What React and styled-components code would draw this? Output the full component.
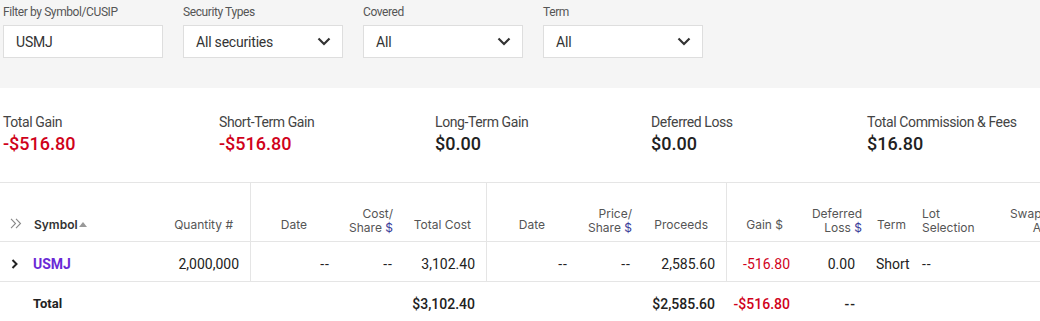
import React from 'react';
import styled, { createGlobalStyle } from 'styled-components';

const Global = createGlobalStyle`
  html, body { margin: 0; padding: 0; background: #fff; overflow: hidden; }
  body { font-family: Roboto, "Noto Sans", sans-serif; color: #222; }
  * { box-sizing: border-box; }
`;

const Page = styled.div`
  width: 1040px;
  overflow: hidden;
`;

const FilterBar = styled.div`
  display: flex;
  gap: 20px;
  height: 88px;
  padding: 5px 3px 0;
  background: #f5f5f5;
`;

const Field = styled.div`
  display: flex;
  flex-direction: column;
  width: 160px;
`;

const FieldLabel = styled.label`
  font-size: 12px;
  line-height: 14px;
  letter-spacing: -0.4px;
  color: #555;
  margin-bottom: 6px;
`;

const Box = styled.div`
  height: 33px;
  display: flex;
  align-items: center;
  justify-content: space-between;
  padding: 0 11px 0 12px;
  background: #fff;
  border: 1px solid #dedede;
  font-size: 14px;
  letter-spacing: -0.2px;
  color: #333;
`;

const Chevron = () => (
  <svg width="14" height="9" viewBox="0 0 14 9">
    <path d="M1.5 1.5 L7 7 L12.5 1.5" fill="none" stroke="#333" strokeWidth="2.2" />
  </svg>
);

const Summary = styled.div`
  display: grid;
  grid-template-columns: repeat(5, 216px);
  padding: 25px 3px 26px;
`;

const Stat = styled.div`
  display: flex;
  flex-direction: column;
`;

const StatLabel = styled.div`
  font-size: 14px;
  line-height: 18px;
  letter-spacing: -0.4px;
  color: #444;
`;

const StatValue = styled.div`
  font-size: 18px;
  line-height: 24px;
  font-weight: 500;
  margin-top: 1px;
  color: ${p => (p.$neg ? '#d0021b' : '#222')};
`;

const Table = styled.table`
  table-layout: fixed;
  width: 1080px;
  border-collapse: separate;
  border-spacing: 0;
  border-top: 1px solid #e5e5e5;
`;

const Th = styled.th`
  height: 59px;
  padding: 0 ${p => p.$pr || 0}px ${p => (p.$two ? 6 : 9)}px ${p => p.$pl || 0}px;
  vertical-align: bottom;
  text-align: ${p => p.$align || 'right'};
  font-family: Inter, Roboto, sans-serif;
  font-size: 12px;
  line-height: 14px;
  font-weight: ${p => (p.$bold ? 600 : 400)};
  color: ${p => (p.$bold ? '#333' : '#555')};
  border-bottom: 1px solid #e5e5e5;
  border-left: ${p => (p.$sep ? '1px solid #e5e5e5' : 'none')};
  white-space: nowrap;
  overflow: hidden;
`;

const Td = styled.td`
  height: 40px;
  padding: 4px ${p => p.$pr || 0}px 0 ${p => p.$pl || 0}px;
  text-align: ${p => p.$align || 'right'};
  font-size: 14px;
  color: ${p => (p.$neg ? '#d0021b' : '#222')};
  border-bottom: 1px solid #e5e5e5;
  border-left: ${p => (p.$sep ? '1px solid #e5e5e5' : 'none')};
  white-space: nowrap;
`;

const FootTd = styled.td`
  height: 40px;
  padding: 3px ${p => p.$pr || 0}px 0 ${p => p.$pl || 0}px;
  text-align: ${p => p.$align || 'right'};
  font-size: ${p => (p.$label ? 13 : 14)}px;
  font-weight: ${p => (p.$label ? 700 : 500)};
  color: ${p => (p.$neg ? '#d0021b' : '#222')};
  white-space: nowrap;
`;

const Dash = styled.span`
  letter-spacing: 1px;
`;

const Dollar = styled.span`
  color: #3a3a9a;
`;

const SymbolLink = styled.a`
  color: #6a2ad6;
  font-weight: 700;
  text-decoration: none;
`;

const SortUp = styled.span`
  display: inline-block;
  width: 0;
  height: 0;
  margin-left: 1px;
  vertical-align: 2px;
  border-left: 4px solid transparent;
  border-right: 4px solid transparent;
  border-bottom: 5px solid #999;
`;

const IconCell = styled.span`
  display: inline-flex;
  padding-left: 10px;
`;

const DoubleChevron = () => (
  <svg width="12" height="11" viewBox="0 0 12 11">
    <path d="M1 0.8 L5.5 5.5 L1 10.2 M6 0.8 L10.5 5.5 L6 10.2" fill="none" stroke="#888" strokeWidth="1.1" />
  </svg>
);

const RowChevron = () => (
  <svg width="8" height="10" viewBox="0 0 8 10">
    <path d="M1.5 1 L5.5 5 L1.5 9" fill="none" stroke="#222" strokeWidth="2" />
  </svg>
);

const cols = [28, 122, 100, 85, 63, 88, 87, 64, 89, 70, 70, 50, 84, 80];

const filters = [
  { label: 'Filter by Symbol/CUSIP', value: 'USMJ', select: false },
  { label: 'Security Types', value: 'All securities', select: true },
  { label: 'Covered', value: 'All', select: true },
  { label: 'Term', value: 'All', select: true },
];

const stats = [
  { label: 'Total Gain', value: '-$516.80', neg: true },
  { label: 'Short-Term Gain', value: '-$516.80', neg: true },
  { label: 'Long-Term Gain', value: '$0.00' },
  { label: 'Deferred Loss', value: '$0.00' },
  { label: 'Total Commission & Fees', value: '$16.80' },
];

const D = () => <Dash>--</Dash>;

export default function App() {
  return (
    <Page>
      <Global />
      <FilterBar>
        {filters.map(f => (
          <Field key={f.label}>
            <FieldLabel>{f.label}</FieldLabel>
            <Box>
              <span>{f.value}</span>
              {f.select && <Chevron />}
            </Box>
          </Field>
        ))}
      </FilterBar>
      <Summary>
        {stats.map(s => (
          <Stat key={s.label}>
            <StatLabel>{s.label}</StatLabel>
            <StatValue $neg={s.neg}>{s.value}</StatValue>
          </Stat>
        ))}
      </Summary>
      <Table>
        <colgroup>
          {cols.map((w, i) => (
            <col key={i} style={{ width: w }} />
          ))}
        </colgroup>
        <thead>
          <tr>
            <Th $align="left"><IconCell><DoubleChevron /></IconCell></Th>
            <Th $align="left" $pl={6} $bold>Symbol<SortUp /></Th>
            <Th $pr={17}>Quantity #</Th>
            <Th $pr={28} $sep>Date</Th>
            <Th $pr={5} $two>Cost/<br />Share <Dollar>$</Dollar></Th>
            <Th $pr={15}>Total Cost</Th>
            <Th $pr={28} $sep>Date</Th>
            <Th $pr={5} $two>Price/<br />Share <Dollar>$</Dollar></Th>
            <Th $pr={18}>Proceeds</Th>
            <Th $pr={13} $sep>Gain $</Th>
            <Th $pr={4} $two>Deferred<br />Loss <Dollar>$</Dollar></Th>
            <Th $align="left" $pl={11}>Term</Th>
            <Th $align="left" $pl={6} $two>Lot<br />Selection</Th>
            <Th $pr={11} $two>Swap Lots<br />Action</Th>
          </tr>
        </thead>
        <tbody>
          <tr>
            <Td $align="left" $pl={11}><RowChevron /></Td>
            <Td $align="left" $pl={5}><SymbolLink href="#">USMJ</SymbolLink></Td>
            <Td $pr={11}>2,000,000</Td>
            <Td $pr={5} $sep><D /></Td>
            <Td $pr={5}><D /></Td>
            <Td $pr={11}>3,102.40</Td>
            <Td $pr={5} $sep><D /></Td>
            <Td $pr={6}><D /></Td>
            <Td $pr={11}>2,585.60</Td>
            <Td $pr={6} $sep $neg>-516.80</Td>
            <Td $pr={11}>0.00</Td>
            <Td $align="left" $pl={10}>Short</Td>
            <Td $align="left" $pl={6}><D /></Td>
            <Td />
          </tr>
        </tbody>
        <tfoot>
          <tr>
            <FootTd />
            <FootTd $align="left" $pl={5} $label>Total</FootTd>
            <FootTd />
            <FootTd />
            <FootTd />
            <FootTd $pr={11}>$3,102.40</FootTd>
            <FootTd />
            <FootTd />
            <FootTd $pr={11}>$2,585.60</FootTd>
            <FootTd $pr={6} $neg>-$516.80</FootTd>
            <FootTd $pr={10}><D /></FootTd>
            <FootTd />
            <FootTd />
            <FootTd />
          </tr>
        </tfoot>
      </Table>
    </Page>
  );
}
